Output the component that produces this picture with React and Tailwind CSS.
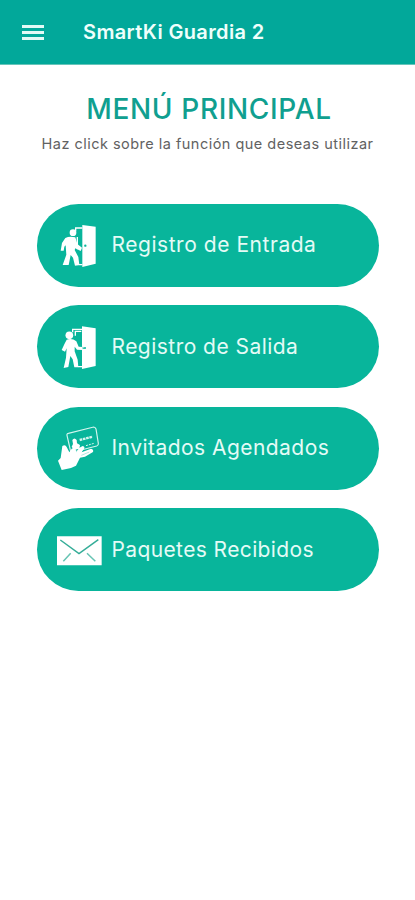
const DoorIn = () => (
    <svg viewBox="0 0 180 180" className="w-[60px] h-[60px] shrink-0">
        <path d="M77 49V39H97M79 149H97M82 66V103" fill="none" stroke="#fff" strokeWidth="4" />
        <path d="M97 30L137 35V146L97 156Z" fill="#fff" />
        <circle cx="106" cy="92" r="3.5" fill="#08b59b" />
        <ellipse cx="69" cy="53" rx="10" ry="10" fill="#fff" />
        <path d="M46 69Q59 62 76 67L82 87L96 98L92 108L76 100L74 105L85 126L88 149L75 152L69 128L62 120L56 150H38L49 119L47 91L43 95L41 107H32L36 84Z" fill="#fff" />
    </svg>
);

const DoorOut = () => (
    <svg viewBox="0 0 180 180" className="w-[60px] h-[60px] shrink-0">
        <path d="M68 46V37H97M76 56V43H94M84 149H97" fill="none" stroke="#fff" strokeWidth="4" />
        <path d="M96 28L137 34V147L96 156V97L105 94L96 89Z" fill="#fff" />
        <circle cx="105" cy="93" r="3" fill="#08b59b" />
        <circle cx="58" cy="55" r="11.5" fill="#fff" />
        <path d="M50 68Q66 62 79 73L86 89L98 90V99L81 98L74 89V103L83 128L85 151H73L68 127L61 117L55 150L41 153L48 122L50 94L45 104L35 99L43 82Z" fill="#fff" />
    </svg>
);

const HandCard = () => (
    <svg viewBox="0 0 180 180" className="w-[60px] h-[60px] shrink-0">
        <path d="M55 46L131 27Q136 28 138 33L145 76Q146 82 140 84L70 102Q63 102 61 96L51 52Q50 47 55 46Z" fill="none" stroke="#d3f5ee" strokeWidth="3.5" />
        <path d="M89 66L128 56" stroke="#d3f5ee" strokeWidth="7" strokeDasharray="8 2" />
        <path d="M108 83L132 76" stroke="#d3f5ee" strokeWidth="3" strokeDasharray="6 3" />
        <path d="M67 66Q73 57 80 66L81 76L90 81L88 92L72 96L65 86L69 78Z" fill="#fff" />
        <path d="M37 84Q46 78 50 87L58 103L65 92Q72 87 77 94L79 103L87 90L98 84Q107 87 101 94L95 103L123 92Q132 94 129 102L105 116L90 119L78 143L63 150L35 156L24 128L32 120Z" fill="#fff" />
        <path d="M94 112L118 102" stroke="#62cebc" strokeWidth="1.5" />
    </svg>
);

const Envelope = () => (
    <svg viewBox="0 0 180 180" className="w-[60px] h-[60px] shrink-0">
        <path d="M21 49H155V136H21Z" fill="#fff" />
        <path d="M31 60L87 101L145 59" fill="none" stroke="#35ad98" strokeWidth="4.5" />
        <path d="M62 100L40 124M111 100L136 124" fill="none" stroke="#66c4b3" strokeWidth="4.5" />
    </svg>
);

const menuItems = [
    { label: 'Registro de Entrada', icon: DoorIn, textClass: 'tracking-[0.54px]' },
    { label: 'Registro de Salida', icon: DoorOut, textClass: 'tracking-[0.46px]' },
    { label: 'Invitados Agendados', icon: HandCard, textClass: 'tracking-[0.46px]' },
    { label: 'Paquetes Recibidos', icon: Envelope, textClass: 'tracking-[0.38px]' },
];

const App = () => {
    return (
        <div className="min-h-screen bg-white font-['Inter',sans-serif] overflow-hidden">
            {/* Header */}
            <header className="h-[65px] bg-[#02a89a] border-b border-[#66c5ba] flex items-center pl-[22px]">
                <button className="w-[22px] flex flex-col gap-[3px] cursor-pointer" aria-label="Menu">
                    <span className="h-[3px] bg-[#e2faf6]" />
                    <span className="h-[3px] bg-[#e2faf6]" />
                    <span className="h-[3px] bg-[#e2faf6]" />
                </button>
                <h1 className="ml-[39px] text-[20px] leading-6 font-semibold tracking-[0.37px] text-[#effffc] whitespace-nowrap">
                    SmartKi Guardia 2
                </h1>
            </header>

            {/* Page title */}
            <div className="pt-[26px] flex flex-col items-center whitespace-nowrap">
                <h2 className="pl-[3px] text-[28px] leading-9 font-medium tracking-[0.65px] text-[#109f90]">MENÚ PRINCIPAL</h2>
                <p className="mt-[7px] text-[14.5px] leading-5 tracking-[0.48px] text-[#626262]">
                    Haz click sobre la función que deseas utilizar
                </p>
            </div>

            {/* Menu buttons */}
            <nav className="mt-[49.5px] ml-[37px] w-[341.5px] flex flex-col gap-[18.5px]">
                {menuItems.map(({ label, icon: Icon, textClass }) => (
                    <button
                        key={label}
                        className="h-[83px] rounded-full bg-[#08b59b] pl-[13px] flex items-center gap-[1.5px] text-left cursor-pointer"
                    >
                        <Icon />
                        <span className={`text-[21px] leading-7 text-[#e4fbf6] whitespace-nowrap ${textClass}`}>
                            {label}
                        </span>
                    </button>
                ))}
            </nav>
        </div>
    );
};

export default App;
